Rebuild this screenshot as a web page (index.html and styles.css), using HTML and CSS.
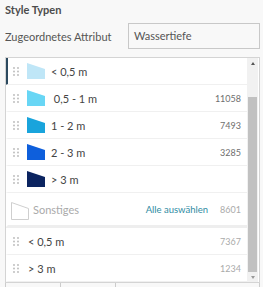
FILE: index.html
```html
<!DOCTYPE html>
<html lang="de">
<head>
  <meta charset="UTF-8"/>
  <title>Style Typen</title>
  <link rel="stylesheet" href="styles.css">
</head>
<body>

<div class="panel">
  <h3 class="title">Style Typen</h3>

  <div class="field-row">
    <span class="field-label">Zugeordnetes Attribut</span>
    <div class="field-input">Wassertiefe</div>
  </div>

  <div class="list">
    <div class="rows">
      <div class="row selected">
        <svg class="handle" width="6" height="9"><circle cx="1" cy="1" r="0.9"/><circle cx="5" cy="1" r="0.9"/><circle cx="1" cy="4.5" r="0.9"/><circle cx="5" cy="4.5" r="0.9"/><circle cx="1" cy="8" r="0.9"/><circle cx="5" cy="8" r="0.9"/></svg>
        <svg class="swatch" width="18" height="16"><polygon points="0,0 18,6 18,16 0,16" fill="#bfe6f7"/></svg>
        <span class="label">&lt; 0,5 m</span>
        <span class="count"></span>
      </div>
      <div class="row">
        <svg class="handle" width="6" height="9"><circle cx="1" cy="1" r="0.9"/><circle cx="5" cy="1" r="0.9"/><circle cx="1" cy="4.5" r="0.9"/><circle cx="5" cy="4.5" r="0.9"/><circle cx="1" cy="8" r="0.9"/><circle cx="5" cy="8" r="0.9"/></svg>
        <svg class="swatch" width="18" height="16"><polygon points="0,0 18,6 18,16 0,16" fill="#68d6f5"/></svg>
        <span class="label"> 0,5 - 1 m</span>
        <span class="count">11058</span>
      </div>
      <div class="row">
        <svg class="handle" width="6" height="9"><circle cx="1" cy="1" r="0.9"/><circle cx="5" cy="1" r="0.9"/><circle cx="1" cy="4.5" r="0.9"/><circle cx="5" cy="4.5" r="0.9"/><circle cx="1" cy="8" r="0.9"/><circle cx="5" cy="8" r="0.9"/></svg>
        <svg class="swatch" width="18" height="16"><polygon points="0,0 18,6 18,16 0,16" fill="#19a4dc"/></svg>
        <span class="label">1 - 2 m</span>
        <span class="count">7493</span>
      </div>
      <div class="row">
        <svg class="handle" width="6" height="9"><circle cx="1" cy="1" r="0.9"/><circle cx="5" cy="1" r="0.9"/><circle cx="1" cy="4.5" r="0.9"/><circle cx="5" cy="4.5" r="0.9"/><circle cx="1" cy="8" r="0.9"/><circle cx="5" cy="8" r="0.9"/></svg>
        <svg class="swatch" width="18" height="16"><polygon points="0,0 18,6 18,16 0,16" fill="#0e5fdc"/></svg>
        <span class="label">2 - 3 m</span>
        <span class="count">3285</span>
      </div>
      <div class="row">
        <svg class="handle" width="6" height="9"><circle cx="1" cy="1" r="0.9"/><circle cx="5" cy="1" r="0.9"/><circle cx="1" cy="4.5" r="0.9"/><circle cx="5" cy="4.5" r="0.9"/><circle cx="1" cy="8" r="0.9"/><circle cx="5" cy="8" r="0.9"/></svg>
        <svg class="swatch" width="18" height="16"><polygon points="0,0 18,6 18,16 0,16" fill="#0b2460"/></svg>
        <span class="label">&gt; 3 m</span>
        <span class="count"></span>
      </div>
      <div class="row other">
        <svg class="swatch" width="18" height="18"><polygon points="0.5,0.5 17.5,6.5 17.5,17.5 0.5,17.5" fill="#fff" stroke="#cfcfcf"/></svg>
        <span class="label">Sonstiges</span>
        <a class="select-all">Alle auswählen</a>
        <span class="count">8601</span>
      </div>
      <div class="row plain">
        <svg class="handle" width="6" height="9"><circle cx="1" cy="1" r="0.9"/><circle cx="5" cy="1" r="0.9"/><circle cx="1" cy="4.5" r="0.9"/><circle cx="5" cy="4.5" r="0.9"/><circle cx="1" cy="8" r="0.9"/><circle cx="5" cy="8" r="0.9"/></svg>
        <span class="label">&lt; 0,5 m</span>
        <span class="count">7367</span>
      </div>
      <div class="row plain">
        <svg class="handle" width="6" height="9"><circle cx="1" cy="1" r="0.9"/><circle cx="5" cy="1" r="0.9"/><circle cx="1" cy="4.5" r="0.9"/><circle cx="5" cy="4.5" r="0.9"/><circle cx="1" cy="8" r="0.9"/><circle cx="5" cy="8" r="0.9"/></svg>
        <span class="label">&gt; 3 m</span>
        <span class="count">1234</span>
      </div>
    </div>

    <div class="scrollbar">
      <span class="arrow up"></span>
      <div class="track"><div class="thumb"></div></div>
      <span class="arrow down"></span>
    </div>
  </div>

  <div class="toolbar">
    <div class="tool"></div>
    <div class="tool"></div>
    <div class="tool wide"></div>
  </div>
</div>

</body>
</html>
```

FILE: styles.css
```css
* { box-sizing: border-box; }
body {
  font-family: Lato, 'Open Sans', sans-serif;
  background: #f8f8f8;
  margin: 0; color: #4c4c4c;
}
.panel { padding: 0 3px 0 5px; }
.title {
  font-size: 11px; font-weight: bold; margin: 0;
  height: 23px; padding-top: 3px;
}
.field-row { display: flex; align-items: center; height: 26px; }
.field-label { width: 123px; font-size: 11px; color: #555; }
.field-input {
  flex: 1; height: 26px; padding: 0 5px;
  border: 1px solid #c8c8c8; background: #f8f8f8;
  font-size: 11px; line-height: 24px; color: #555;
}
.list {
  display: flex; margin-top: 8px; height: 226px;
  border: 1px solid #d4d4d4; background: #fff;
}
.rows { flex: 1; overflow: hidden; }
.row {
  display: flex; align-items: center; height: 27px;
  padding: 0 6px 0 7px; border-bottom: 1px solid #f0f0f0;
  border-left: 3px solid transparent; margin-left: -1px;
}
.row.selected { border-left-color: #2c4a5f; }
.handle { fill: #b8b8b8; flex: none; margin-left: -2px; }
.swatch { flex: none; margin-left: 8px; }
.label {
  font-size: 11px; color: #444; margin-left: 6px; white-space: pre;
}
.count {
  margin-left: auto; font-size: 9px; color: #6e6e6e;
}
.row.other { height: 35px; border-bottom: 3px solid #eee; }
.row.other .swatch { margin-left: -4px; margin-top: 4px; }
.row.other .label { color: #aaa; margin-left: 4px; }
.row.other .count { margin-left: 12px; color: #aaa; }
.select-all { margin-left: auto; font-size: 9.5px; color: #2f8ca3; }
.row.plain .label { margin-left: 9px; }
.row.plain .count { color: #aaa; }
.scrollbar {
  width: 11px; margin-right: 1px; background: #f1f1f1;
  display: flex; flex-direction: column;
}
.arrow { height: 10px; display: flex; justify-content: center; align-items: center; }
.arrow::before {
  content: ''; border-left: 2.5px solid transparent; border-right: 2.5px solid transparent;
}
.arrow.up::before { border-bottom: 3px solid #555; }
.arrow.down::before { border-top: 3px solid #999; }
.track { flex: 1; padding: 29px 1px 0; }
.thumb { height: 100%; background: #c1c1c1; }
.toolbar { display: flex; height: 10px; border-left: 1px solid #ccc; border-right: 1px solid #ccc; }
.tool { width: 55px; border-right: 1px solid #ccc; }
.tool.wide { flex: 1; border-right: none; }
```
